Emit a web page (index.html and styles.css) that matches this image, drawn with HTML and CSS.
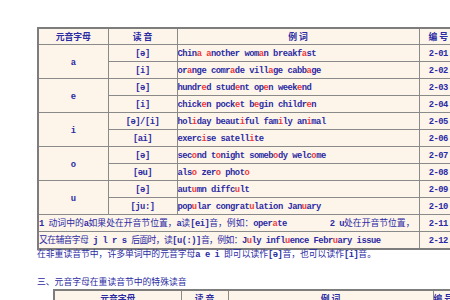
FILE: index.html
```html
<!DOCTYPE html>
<html lang="zh">
<head>
<meta charset="utf-8">
<link rel="stylesheet" href="styles.css">
</head>
<body>
<div class="page">
<table class="vt t1">
  <colgroup><col class="c1"><col class="c2"><col class="c3"><col class="c4"></colgroup>
  <tr class="hd"><th>元音字母</th><th>读 音</th><th>例 词</th><th>编 号</th></tr>
  <tr><td class="v" rowspan="2"><span class="en">a</span></td><td class="p"><span class="en">[ə]</span></td><td class="w"><span class="en">Chin<b>a</b> <b>a</b>nother wom<b>a</b>n breakf<b>a</b>st</span></td><td class="n"><span class="en">2-01</span></td></tr>
  <tr><td class="p"><span class="en">[i]</span></td><td class="w"><span class="en">or<b>a</b>nge comr<b>a</b>de vill<b>a</b>ge cabb<b>a</b>ge</span></td><td class="n"><span class="en">2-02</span></td></tr>
  <tr><td class="v" rowspan="2"><span class="en">e</span></td><td class="p"><span class="en">[ə]</span></td><td class="w"><span class="en">hundr<b>e</b>d stud<b>e</b>nt op<b>e</b>n week<b>e</b>nd</span></td><td class="n"><span class="en">2-03</span></td></tr>
  <tr><td class="p"><span class="en">[i]</span></td><td class="w"><span class="en">chick<b>e</b>n pock<b>e</b>t b<b>e</b>gin childr<b>e</b>n</span></td><td class="n"><span class="en">2-04</span></td></tr>
  <tr><td class="v" rowspan="2"><span class="en">i</span></td><td class="p"><span class="en">[ə]/[i]</span></td><td class="w"><span class="en">hol<b>i</b>day beaut<b>i</b>ful fam<b>i</b>ly an<b>i</b>mal</span></td><td class="n"><span class="en">2-05</span></td></tr>
  <tr><td class="p"><span class="en">[ai]</span></td><td class="w"><span class="en">exerc<b>i</b>se satell<b>i</b>te</span></td><td class="n"><span class="en">2-06</span></td></tr>
  <tr><td class="v" rowspan="2"><span class="en">o</span></td><td class="p"><span class="en">[ə]</span></td><td class="w"><span class="en">sec<b>o</b>nd t<b>o</b>night someb<b>o</b>dy welc<b>o</b>me</span></td><td class="n"><span class="en">2-07</span></td></tr>
  <tr><td class="p"><span class="en">[əu]</span></td><td class="w"><span class="en">als<b>o</b> zer<b>o</b> phot<b>o</b></span></td><td class="n"><span class="en">2-08</span></td></tr>
  <tr><td class="v" rowspan="2"><span class="en">u</span></td><td class="p"><span class="en">[ə]</span></td><td class="w"><span class="en">aut<b>u</b>mn diffc<b>u</b>lt</span></td><td class="n"><span class="en">2-09</span></td></tr>
  <tr><td class="p"><span class="en">[ju:]</span></td><td class="w"><span class="en">pop<b>u</b>lar congrat<b>u</b>lation Jan<b>u</b>ary</span></td><td class="n"><span class="en">2-10</span></td></tr>
  <tr><td class="note" colspan="3"><span class="en">1 </span>动词中的<span class="en">a</span>如果处在开音节位置，<span class="en">a</span>读<span class="en">[ei]</span>音，例如：<span class="en">oper<b>a</b>te&nbsp;&nbsp;&nbsp;&nbsp;&nbsp;&nbsp;&nbsp;&nbsp;&nbsp;2 u</span>处在开音节位置，</td><td class="n"><span class="en">2-11</span></td></tr>
  <tr><td class="note tight" colspan="3">又在辅音字母<span class="en"> j l r s </span>后面时，读<span class="en">[u(:)]</span>音，例如：<span class="en">J<b>u</b>ly infl<b>u</b>ence Febr<b>u</b>ary issue</span></td><td class="n"><span class="en">2-12</span></td></tr>
</table>
<p class="line">在非重读音节中，许多单词中的元音字母<span class="en">a e i </span>即可以读作<span class="en">[ə]</span>音，也可以读作<span class="en">[i]</span>音。</p>
<p class="title">三、元音字母在重读音节中的特殊读音</p>
<table class="vt t2">
  <colgroup><col class="d1"><col class="d2"><col class="d3"><col class="d4"></colgroup>
  <tr class="hd"><th>元音字母</th><th>读 音</th><th>例 词</th><th>编 号</th></tr>
</table>
</div>
</body>
</html>
```
FILE: styles.css
```css
html, body {
  margin: 0;
  padding: 0;
  overflow: hidden;
  background: #ffffff;
}
.page {
  width: 460px;
  padding: 27px 0 0 37px;
  font-family: "Liberation Mono", "Noto Sans CJK SC", monospace;
  font-size: 8.8px;
  color: #2b2ba3;
}
.vt {
  border-collapse: collapse;
  table-layout: fixed;
  background: #fdf4ea;
  border: 2px solid #7d7d7d;
}
.t1 { width: 420px; }
.c1 { width: 70px; }
.c2 { width: 69px; }
.c3 { width: 242px; }
.c4 { width: 39px; }
.vt th, .vt td {
  border: 1px solid #8a8a8a;
  padding: 3px 0 1px 0;
  line-height: 12px;
  white-space: nowrap;
  overflow: hidden;
  color: #2b2ba3;
}
.vt th {
  padding: 2px 0 1px 0;
  font-family: "Noto Sans CJK SC", sans-serif;
  font-weight: bold;
  font-size: 8.8px;
  text-align: center;
}
.en {
  font-family: "Liberation Mono", monospace;
  letter-spacing: -0.5px;
  font-weight: bold;
}
.en b { color: #f03a3a; }
.v, .p, .n { text-align: center; }
.w { padding-left: 1px; text-align: left; }
.note { text-align: left; padding-left: 1px; }
.tight { letter-spacing: -0.6px; }
.line {
  margin: 0;
  height: 12px;
  line-height: 10px;
}
.title {
  margin: 15px 0 0 0;
  height: 12px;
  line-height: 12px;
}
.t2 {
  margin-left: 16px;
  width: 400px;
}
.d1 { width: 127px; }
.d2 { width: 47px; }
.d3 { width: 205px; }
.d4 { width: 21px; }
```
